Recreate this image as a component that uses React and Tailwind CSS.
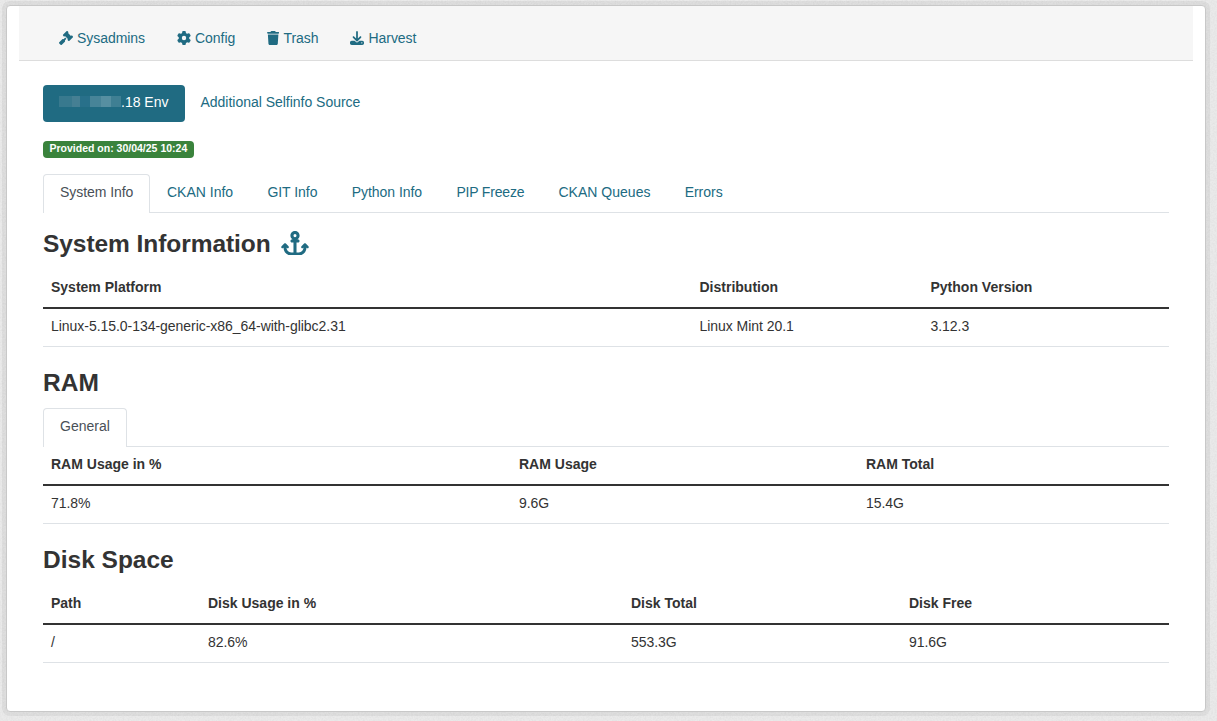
import { FaGavel, FaGear, FaTrash, FaDownload, FaAnchor } from "react-icons/fa6";

const adminLinks = [
  { label: "Sysadmins", Icon: FaGavel, width: "w-[14px]" },
  { label: "Config", Icon: FaGear, width: "w-[14px]" },
  { label: "Trash", Icon: FaTrash, width: "w-[12.25px]" },
  { label: "Harvest", Icon: FaDownload, width: "w-[14px]" },
];

const tabs = [
  ["System Info", "w-[107px] tracking-[-0.06px]"],
  ["CKAN Info", "w-[100.4px] tracking-[0px]"],
  ["GIT Info", "w-[84.3px] tracking-[-0.03px]"],
  ["Python Info", "w-[104.7px] tracking-[-0.04px]"],
  ["PIP Freeze", "w-[102px] tracking-[-0.18px]"],
  ["CKAN Queues", "w-[126.3px] tracking-[0.03px]"],
  ["Errors", "w-[72px] tracking-[-0.03px]"],
];

function Tabs({ items }) {
  return (
    <ul className="flex h-[39px] border-b border-[#dee2e6]">
      {items.map(([item, size], i) => (
        <li
          key={item}
          className={`${size} h-[39px] whitespace-nowrap border pl-4 pt-[7px] ${
            i === 0
              ? "rounded-t-[4px] border-b-0 border-[#dee2e6] bg-white text-[#495057]"
              : "border-transparent text-[#206b82]"
          }`}
        >
          {item}
        </li>
      ))}
    </ul>
  );
}

function InfoTable({ columns, row }) {
  return (
    <div>
      <div className="flex h-[39px] border-b-2 border-[#333333] pt-[7px] font-bold">
        {columns.map(([name, width]) => (
          <div key={name} className={`${width} px-2`}>{name}</div>
        ))}
      </div>
      <div className="flex h-[38px] border-b border-[#dee2e6] pt-[7px] tracking-[-0.04px]">
        {row.map((value, i) => (
          <div key={value} className={`${columns[i][1]} px-2`}>{value}</div>
        ))}
      </div>
    </div>
  );
}

function Grain() {
  return (
    <svg className="absolute inset-0 h-full w-full" aria-hidden="true">
      <filter id="grain">
        <feTurbulence type="fractalNoise" baseFrequency="0.6" numOctaves="2" seed="4" />
        <feColorMatrix values="0 0 0 0 0.5  0 0 0 0 0.5  0 0 0 0 0.5  0.35 0 0 0 -0.12" />
      </filter>
      <rect width="100%" height="100%" filter="url(#grain)" />
    </svg>
  );
}

export default function App() {
  return (
    <div className="relative h-[721px] w-[1217px] overflow-hidden bg-[#eaeaea] pl-[6px] pt-[5px] font-['Liberation_Sans',Arial,sans-serif] text-[14px] leading-[21px] text-[#333333]">
      <Grain />
      <main className="relative h-[707px] w-[1200px] rounded-[4px] border border-[#c8c8c8] bg-white px-3 shadow-[0_0_0_4px_rgba(0,0,0,0.05)]">
        <header className="flex h-[55px] items-start gap-8 border-b border-[#dddddd] bg-[#f6f6f6] pl-10 pt-[22px] tracking-[-0.05px] text-[#206b82]">
          {adminLinks.map(({ label, Icon, width }) => (
            <a key={label} className="flex items-center gap-1">
              <Icon className={`mb-px h-[14px] ${width}`} />
              {label}
            </a>
          ))}
        </header>
        <div className="px-6 pt-6">
          <div className="flex h-[37px]">
            <button className="flex h-[37px] w-[142px] rounded-[4px] bg-[#206b82] pl-4 pt-[7px] text-white">
              <span className="mt-[4px] flex h-[11px] w-[62px] overflow-hidden">
                <span className="w-[13px] bg-[#38798e]" />
                <span className="w-[8px] bg-[#457f93]" />
                <span className="w-[10px] bg-[#28708a]" />
                <span className="w-[11px] bg-[#478498]" />
                <span className="w-[10px] bg-[#568fa1]" />
                <span className="w-[10px] bg-[#3f7f93]" />
              </span>
              <span>.18 Env</span>
            </button>
            <a className="pl-[15.5px] pt-[7px] tracking-[-0.02px] text-[#206b82]">Additional Selfinfo Source</a>
          </div>
          <div className="mt-[19px] h-[17px] w-[151px] rounded-[4px] bg-[#3a833c] pl-[6.5px] text-[10.5px] font-bold leading-[15px] text-white">
            Provided on: 30/04/25 10:24
          </div>
          <div className="mt-4">
            <Tabs items={tabs} />
          </div>
          <h2 className="mb-[10px] mt-[15px] flex h-[32px] items-center text-[24.5px] font-bold leading-[32px] tracking-[-0.06px]">
            System Information
            <FaAnchor className="mb-[2px] ml-[10px] h-[24.5px] w-[28px]" color="#206b82" />
          </h2>
          <InfoTable
            columns={[["System Platform", "w-[648.5px]"], ["Distribution", "w-[231px]"], ["Python Version", "w-[246px]"]]}
            row={["Linux-5.15.0-134-generic-x86_64-with-glibc2.31", "Linux Mint 20.1", "3.12.3"]}
          />
          <h2 className="mb-[9px] mt-5 h-[32px] text-[24.5px] font-bold leading-[32px]">RAM</h2>
          <Tabs items={[["General", "w-[84px]"]]} />
          <InfoTable
            columns={[["RAM Usage in %", "w-[468px]"], ["RAM Usage", "w-[347px]"], ["RAM Total", "w-[311px]"]]}
            row={["71.8%", "9.6G", "15.4G"]}
          />
          <h2 className="mb-[10px] mt-5 h-[32px] text-[24.5px] font-bold leading-[32px]">Disk Space</h2>
          <InfoTable
            columns={[["Path", "w-[157px]"], ["Disk Usage in %", "w-[423px]"], ["Disk Total", "w-[278px]"], ["Disk Free", "w-[268px]"]]}
            row={["/", "82.6%", "553.3G", "91.6G"]}
          />
        </div>
      </main>
    </div>
  );
}
